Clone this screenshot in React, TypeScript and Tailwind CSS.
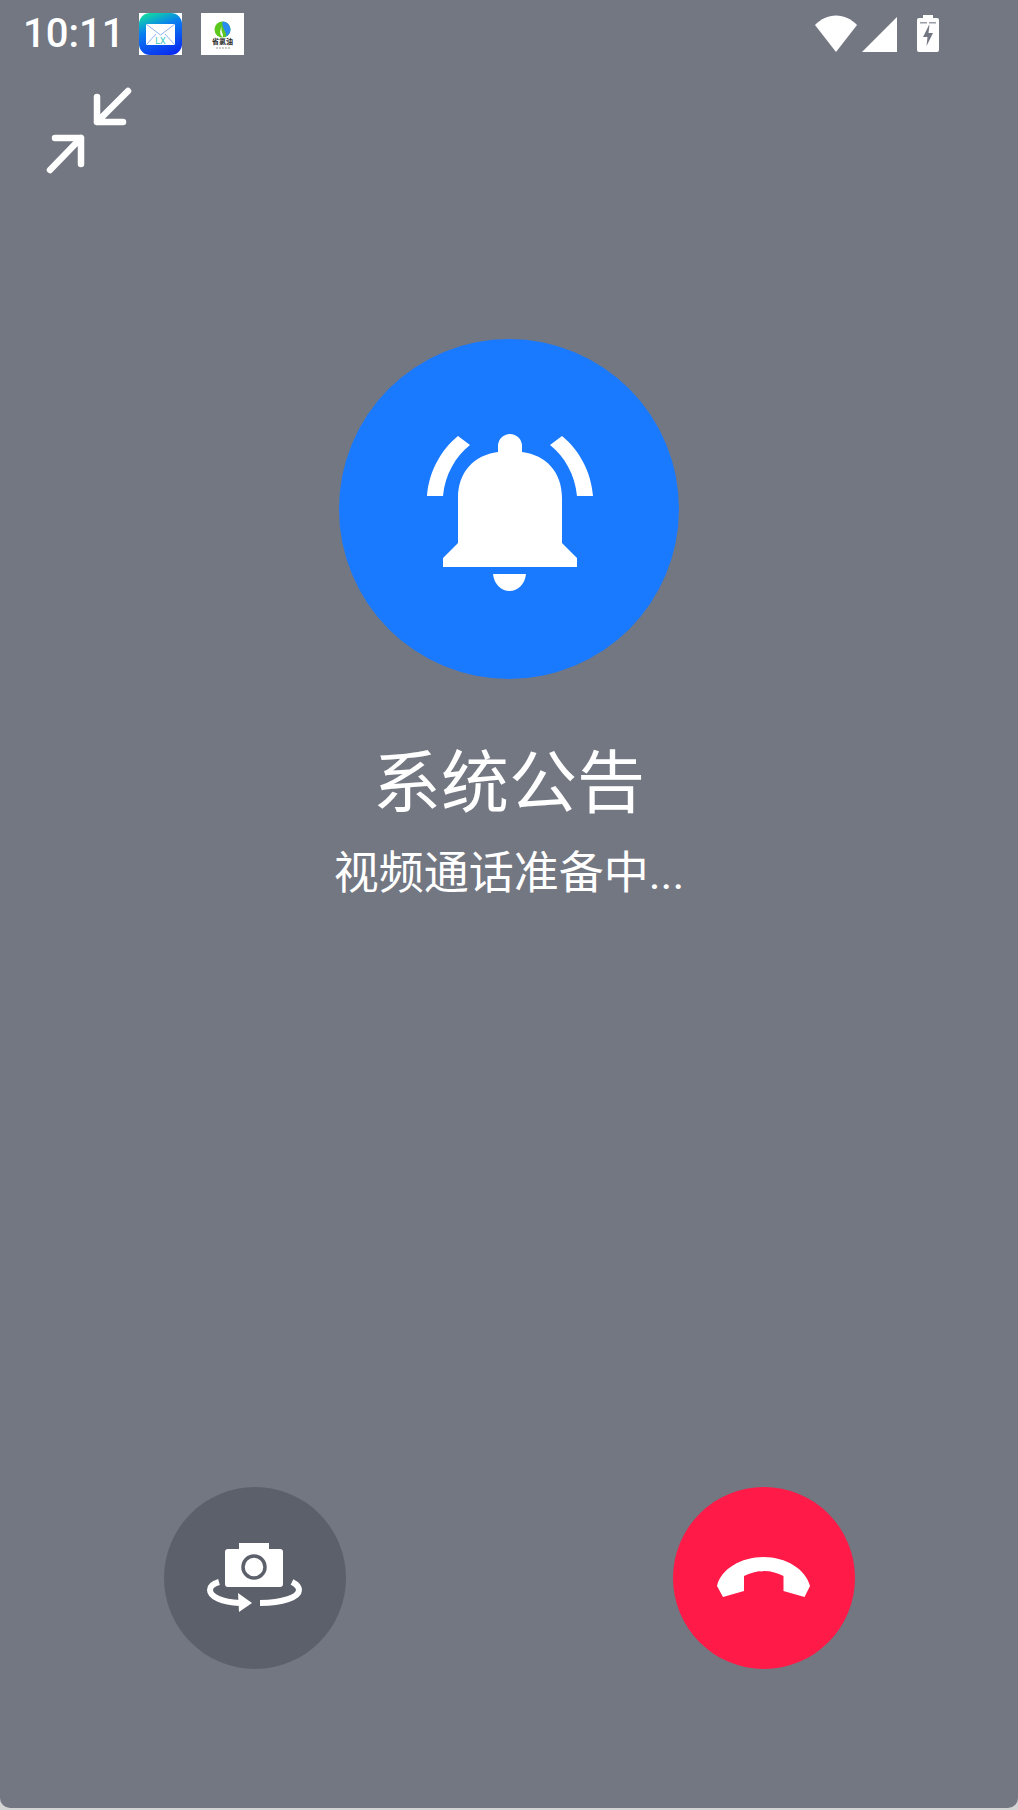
const CJK = 'font-["Roboto","Noto_Sans_CJK_SC",sans-serif]';

const StatusBar = () => (
  <div className="flex h-[66px] items-start justify-between pl-[23px] pr-[79px]">
    <div className="flex items-center pt-[13px]">
      <span className="w-[116px] font-['Roboto',sans-serif] text-[40px] leading-[42px] font-medium text-white">10:11</span>
      {/* mail app icon */}
      <svg width="43" height="42" viewBox="0 0 43 42" className="block">
        <defs>
          <linearGradient id="mailFill" x1="0.3" y1="0" x2="0.7" y2="1">
            <stop offset="0" stopColor="#0fd3a8" />
            <stop offset="0.35" stopColor="#0a7ff0" />
            <stop offset="1" stopColor="#0a2cf0" />
          </linearGradient>
        </defs>
        <rect width="43" height="42" fill="#fff" />
        <rect width="43" height="42" rx="11" fill="url(#mailFill)" />
        <rect x="7" y="11" width="29" height="21" fill="#fff" />
        <path d="M7 11l14.500 11L36 11M7 32l10-11M36 32L26 21" fill="none" stroke="#8fb4f5" strokeWidth="1" />
        <text x="21.500" y="31" textAnchor="middle" fontSize="9" fill="#35c6c0" fontFamily="Roboto, sans-serif">LX</text>
      </svg>
      {/* brand logo tile */}
      <div className="ml-[19px] flex h-[42px] w-[43px] flex-col items-center bg-white pt-[8px]">
        <svg width="17" height="17" viewBox="0 0 17 17" className="block">
          <circle cx="8.500" cy="8.500" r="8" fill="#5cc81e" />
          <path d="M8.500.5a8 8 0 0 1 3 15.400C14 11 7 8 8.500.5z" fill="#2a8cf0" />
          <path d="M8 5c-2 4 1 6 1 11-3-1-4-6-1-11z" fill="#fff" />
        </svg>
        <span className={`${CJK} mt-[1px] text-[7px] leading-[7px] font-bold whitespace-nowrap text-neutral-800`}>省氯油</span>
        <svg width="14" height="2" viewBox="0 0 14 2" className="mt-[1px] block">
          <path d="M0 1h14" stroke="#9a9a9a" strokeWidth="1" strokeDasharray="2 1" />
        </svg>
      </div>
    </div>
    <div className="flex items-start pt-[15px]">
      <svg width="42" height="37" viewBox="0 0 42 37" className="block">
        <path d="M0 10C6 4 13 .5 21 .5S36 4 42 10L21 37z" fill="#fff" />
      </svg>
      <svg width="35" height="35" viewBox="0 0 35 35" className="mt-[2px] ml-[5px] block">
        <path d="M35 0v35H0z" fill="#fff" />
      </svg>
      <svg width="22" height="37" viewBox="0 0 22 37" className="ml-[20px] block">
        <path
          fillRule="evenodd"
          d="M6 0h10v3h4a2 2 0 0 1 2 2v30a2 2 0 0 1-2 2H2a2 2 0 0 1-2-2V5a2 2 0 0 1 2-2h4zM12 10l-6 12h4.500l-1 9 6.500-13h-4.500l1-8z"
          fill="#fff"
        />
        <rect x="3" y="7" width="7" height="1.500" fill="#9a9ca6" />
        <rect x="12" y="7" width="7" height="1.500" fill="#9a9ca6" />
      </svg>
    </div>
  </div>
);

const BellIcon = () => (
  <svg width="340" height="340" viewBox="339 339 340 340" className="block">
    <g fill="#fff">
      <path d="M498 446a12 12 0 1 1 24 0v6C546 455 562 472 562 498v45l15 15v9H443v-9l15-15v-45C458 472 474 455 498 452z" />
      <path d="M493 574h33c-1 10-8 17-16.500 17S494 584 493 574z" />
      <path d="M427 496c2-25 14-46 31-60l12 9c-15 12-25 30-27 51z" />
      <path d="M593 496c-2-25-14-46-31-60l-12 9c15 12 25 30 27 51z" />
    </g>
  </svg>
);

const CameraSwitchIcon = () => (
  <svg width="182" height="182" viewBox="164 1487 182 182" className="block">
    <path d="M239 1549v-6h30v6h11a3 3 0 0 1 3 3v32a3 3 0 0 1-3 3h-52a3 3 0 0 1-3-3v-32a3 3 0 0 1 3-3z" fill="#fff" />
    <circle cx="254" cy="1567" r="11" fill="none" stroke="#5c606b" strokeWidth="3.500" />
    <path d="M219 1582c-7 2-9 5-9 8 0 7 12 12 30 13" fill="none" stroke="#fff" strokeWidth="6" />
    <path d="M238 1593l14 10-13 9z" fill="#fff" />
    <path d="M260 1603c23 0 39-6 39-13 0-3-3-6-7-8" fill="none" stroke="#fff" strokeWidth="6" />
  </svg>
);

const HangUpIcon = () => (
  <svg width="182" height="182" viewBox="673 1487 182 182" className="block">
    <path
      d="M717 1586c4-17 24-29 46.500-29s42 12 46.500 29l-5.500 11-21-6v-15c-6-3-12-5-19.500-5s-14 2-20 5v15l-21 6z"
      fill="#fff"
    />
  </svg>
);

export default function App() {
  return (
    <div className="h-[1810px] w-full bg-[#d4d4d4]">
      <div className="flex h-[1808px] flex-col rounded-b-[10px] bg-[#737782]">
        <StatusBar />

        {/* collapse to floating window */}
        <div className="pt-[19px] pl-[43px]">
          <svg width="92" height="92" viewBox="43 85 92 92" className="block">
            <g fill="none" stroke="#fff" strokeWidth="6.500" strokeLinecap="round" strokeLinejoin="round">
              <path d="M128 91L97 122M97 97v25h26" />
              <path d="M50 170l31-32M55 138h26v26" />
            </g>
          </svg>
        </div>

        <div className="mt-[162px] flex flex-col items-center">
          <div className="flex h-[340px] w-[340px] items-center justify-center rounded-full bg-[#1a7aff]">
            <BellIcon />
          </div>
          <h1 className={`${CJK} mt-[61px] text-[68px] leading-[88px] font-normal text-white`}>系统公告</h1>
          <p className={`${CJK} mt-[16px] text-[45px] leading-[60px] text-white`}>视频通话准备中...</p>
        </div>

        <div className="mt-auto flex justify-between pr-[163px] pb-[139px] pl-[164px]">
          <button className="h-[182px] w-[182px] rounded-full bg-[#5c606b]">
            <CameraSwitchIcon />
          </button>
          <button className="h-[182px] w-[182px] rounded-full bg-[#ff1a47]">
            <HangUpIcon />
          </button>
        </div>
      </div>
    </div>
  );
}
